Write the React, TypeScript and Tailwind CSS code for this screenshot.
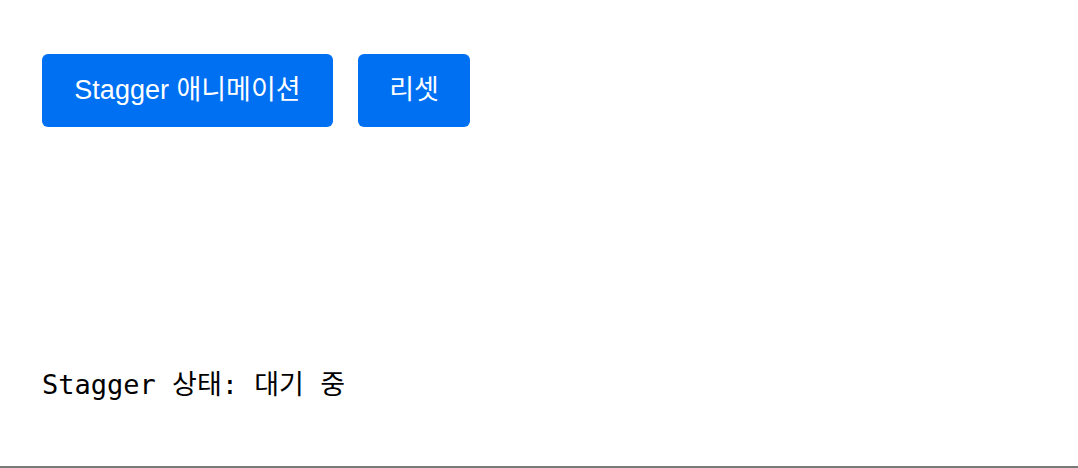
export default function App() {
  return (
    <div className="h-[468px] w-full bg-white border-b-2 border-[#7a7a7a] px-[42px] pt-[54px]">
      <div className="flex gap-[25px]">
        <button className="h-[73px] w-[291px] rounded-[6px] bg-[#0070f3] text-white text-[27px] font-['Liberation_Sans','Noto_Sans_CJK_KR',sans-serif]">
          Stagger 애니메이션
        </button>
        <button className="h-[73px] w-[112px] rounded-[6px] bg-[#0070f3] text-white text-[27px] font-['Liberation_Sans','Noto_Sans_CJK_KR',sans-serif]">
          리셋
        </button>
      </div>
      <p className="mt-[242px] text-[27px] leading-[32px] text-black font-['DejaVu_Sans_Mono','Noto_Sans_CJK_KR',monospace]">
        Stagger 상태: 대기 중
      </p>
    </div>
  )
}
